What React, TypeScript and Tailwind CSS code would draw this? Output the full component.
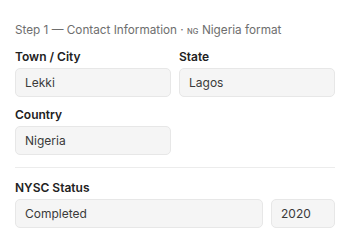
export default function App() {
  return (
    <div className="w-[352px] h-[246px] bg-white pl-[15px] pr-[17px] pt-[22px] font-['Inter',sans-serif] overflow-hidden">
      <p className="text-[11.75px] leading-4 text-[#6e6e6e]">
        Step 1 — Contact Information · <span className="text-[7.5px] font-medium tracking-[0.02em]">NG</span> Nigeria format
      </p>

      <div className="mt-[9px] grid grid-cols-2 gap-x-2">
        <Field label="Town / City" value="Lekki" />
        <Field label="State" value="Lagos" />
      </div>

      <div className="mt-[10px] grid grid-cols-2 gap-x-2">
        <Field label="Country" value="Nigeria" />
      </div>

      <div className="my-3 h-px bg-[#ececec]" />

      <p className="text-[12px] leading-4 font-semibold text-[#222]">NYSC Status</p>
      <div className="mt-[3px] flex gap-2">
        <Box value="Completed" className="flex-1" />
        <Box value="2020" className="w-16" />
      </div>
    </div>
  )
}

function Field({ label, value }: { label: string; value: string }) {
  return (
    <div>
      <p className="text-[12px] leading-4 font-semibold text-[#222]">{label}</p>
      <Box value={value} className="mt-[3px]" />
    </div>
  )
}

function Box({ value, className = '' }: { value: string; className?: string }) {
  return (
    <div
      className={`h-[29px] flex items-center px-[9px] rounded-[5px] bg-[#f5f5f5] border border-[#e7e7e7] text-[12px] text-[#3a3a3a] ${className}`}
    >
      {value}
    </div>
  )
}
